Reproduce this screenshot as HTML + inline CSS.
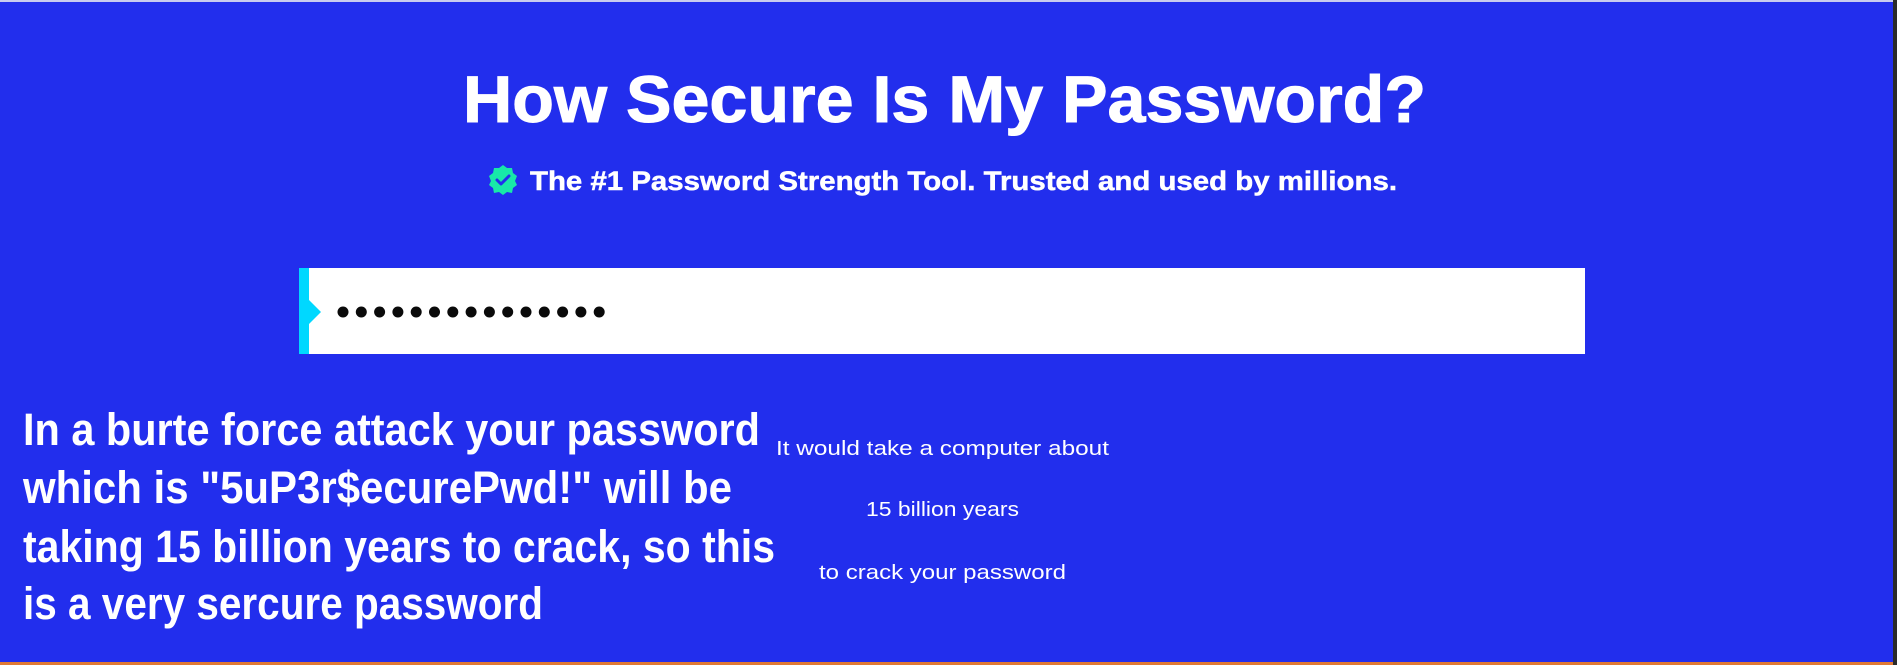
<!DOCTYPE html>
<html><head><meta charset="utf-8"><style>
html,body{margin:0;padding:0;background:#222eed;width:1897px;height:665px;overflow:hidden}
svg{display:block}
</style></head><body>
<svg width="1897" height="665" viewBox="0 0 1897 665" xmlns="http://www.w3.org/2000/svg">
<rect x="0" y="0" width="1897" height="665" fill="#222eed"/>
<rect x="0" y="0" width="1897" height="2" fill="#c9ccef"/>
<rect x="1893" y="0" width="4" height="665" fill="#2a2a2a"/>
<rect x="0" y="662" width="1893" height="3" fill="#e07a35"/>
<text x="463" y="122" font-family="Liberation Sans, sans-serif" font-weight="bold" font-size="66" fill="#fff" stroke="#fff" stroke-width="1" textLength="963" lengthAdjust="spacingAndGlyphs">How Secure Is My Password?</text>
<g transform="translate(503,180)">
<path d="M0,-15 L4,-12 L9,-12 L10,-7 L14,-4 L12,1 L14,5 L10,8 L9,13 L4,12 L0,15 L-4,12 L-9,13 L-10,8 L-14,5 L-12,1 L-14,-4 L-10,-7 L-9,-12 L-4,-12 Z" fill="#18e8a8"/>
<path d="M-6,0 L-2,4 L6,-4" stroke="#222eed" stroke-width="3" fill="none" stroke-linecap="round" stroke-linejoin="round"/>
</g>
<text x="530" y="190" font-family="Liberation Sans, sans-serif" font-weight="bold" font-size="27" fill="#fff" stroke="#fff" stroke-width="0.5" textLength="867" lengthAdjust="spacingAndGlyphs">The #1 Password Strength Tool. Trusted and used by millions.</text>
<rect x="299" y="268" width="1286" height="86" fill="#fff"/>
<rect x="299" y="268" width="10" height="86" fill="#00d8ff"/>
<path d="M309,300 L321,312 L309,324 Z" fill="#00d8ff"/>
<g fill="#0a0a0a">
<circle cx="343" cy="312" r="5.5"/><circle cx="361.3" cy="312" r="5.5"/><circle cx="379.6" cy="312" r="5.5"/><circle cx="397.9" cy="312" r="5.5"/><circle cx="416.2" cy="312" r="5.5"/><circle cx="434.5" cy="312" r="5.5"/><circle cx="452.8" cy="312" r="5.5"/><circle cx="471.1" cy="312" r="5.5"/><circle cx="489.4" cy="312" r="5.5"/><circle cx="507.7" cy="312" r="5.5"/><circle cx="526" cy="312" r="5.5"/><circle cx="544.3" cy="312" r="5.5"/><circle cx="562.6" cy="312" r="5.5"/><circle cx="580.9" cy="312" r="5.5"/><circle cx="599.2" cy="312" r="5.5"/>
</g>
<g font-family="Liberation Sans, sans-serif" font-weight="bold" font-size="45" fill="#fff">
<text x="23" y="445" textLength="737" lengthAdjust="spacingAndGlyphs">In a burte force attack your password</text>
<text x="23" y="503" textLength="709" lengthAdjust="spacingAndGlyphs">which is "5uP3r$ecurePwd!" will be</text>
<text x="23" y="562" textLength="752" lengthAdjust="spacingAndGlyphs">taking 15 billion years to crack, so this</text>
<text x="23" y="619" textLength="520" lengthAdjust="spacingAndGlyphs">is a very sercure password</text>
</g>
<g font-family="Liberation Sans, sans-serif" font-size="20" fill="#fff">
<text x="776" y="455" textLength="333" lengthAdjust="spacingAndGlyphs">It would take a computer about</text>
<text x="866" y="516" textLength="153" lengthAdjust="spacingAndGlyphs">15 billion years</text>
<text x="819" y="579" textLength="247" lengthAdjust="spacingAndGlyphs">to crack your password</text>
</g>
</svg>
</body></html>
